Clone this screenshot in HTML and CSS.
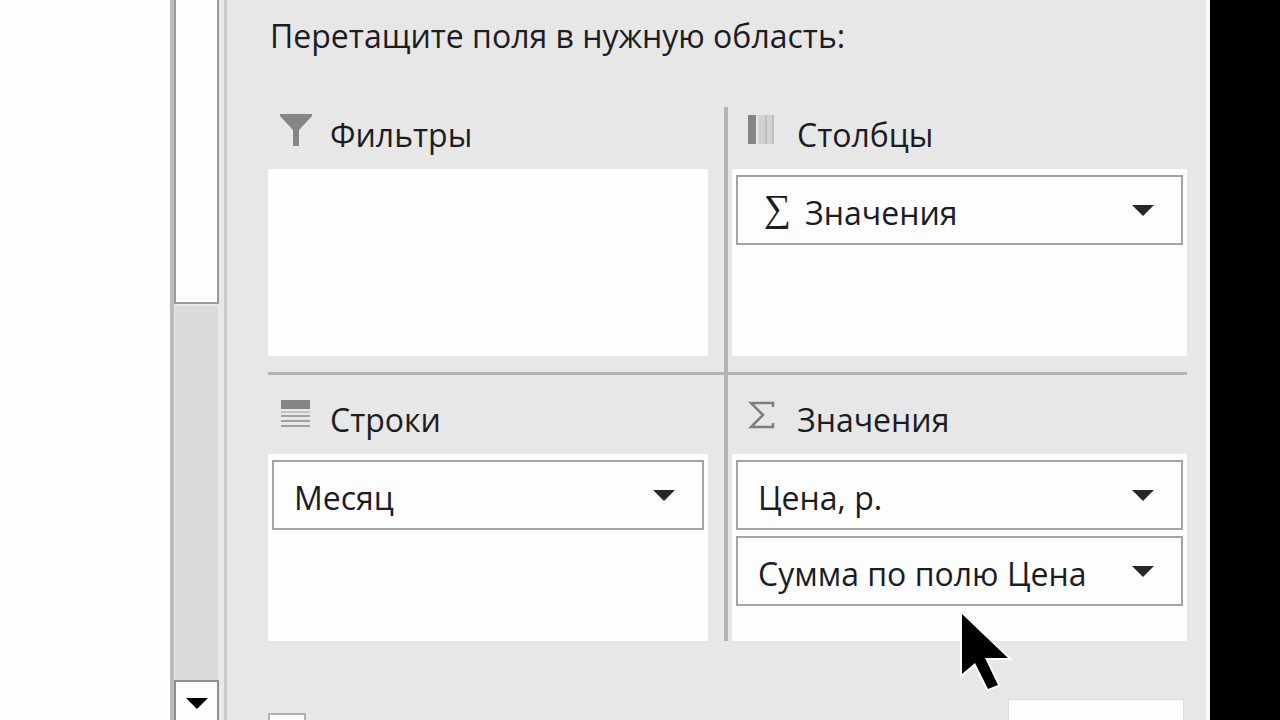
FILE: index.html
```html
<!DOCTYPE html>
<html lang="ru">
<head>
    <meta charset="UTF-8">
    <meta name="viewport" content="width=device-width, initial-scale=1.0">
    <title>Поля сводной таблицы</title>
    <link rel="stylesheet" href="styles.css">
</head>
<body>
    <div class="sheet"></div>

    <div class="scrollbar">
        <div class="thumb"></div>
        <div class="track"></div>
        <button class="scroll-down" aria-label="Вниз">
            <svg class="arrow" viewBox="0 0 22 11"><path d="M0 0H22L11 11Z"/></svg>
        </button>
    </div>

    <main class="panel">
        <h1>Перетащите поля в нужную область:</h1>

        <div class="areas">
            <section class="area area-left">
                <h2>
                    <svg class="icon" viewBox="0 0 32 32"><path fill="#858585" d="M0 0H32V2L19 16V32H13V16L0 2Z"/></svg>
                    Фильтры
                </h2>
                <div class="drop"></div>
            </section>

            <section class="area area-right">
                <h2>
                    <svg class="icon" viewBox="0 0 32 32">
                        <path fill="#858585" d="M1 1H9V30H1Z"/>
                        <path fill="#d2d2d2" d="M11 1H27V30H11Z"/>
                        <path fill="#bebebe" d="M18 1H20V30H18ZM25 1H27V30H25Z"/>
                    </svg>
                    Столбцы
                </h2>
                <div class="drop">
                    <button class="field">
                        <span class="sum">∑</span>
                        <span class="name">Значения</span>
                        <svg class="arrow" viewBox="0 0 22 11"><path d="M0 0H22L11 11Z"/></svg>
                    </button>
                </div>
            </section>

            <section class="area area-left area-bottom">
                <h2>
                    <svg class="icon" viewBox="0 0 32 32">
                        <path fill="#858585" d="M1 1H30V10H1Z"/>
                        <path fill="#c4c4c4" d="M1 12H30V14H1Z"/>
                        <path fill="#a0a0a0" d="M1 16H30V18H1ZM1 21H30V23H1ZM1 26H30V28H1Z"/>
                    </svg>
                    Строки
                </h2>
                <div class="drop">
                    <button class="field">
                        <span class="name">Месяц</span>
                        <svg class="arrow" viewBox="0 0 22 11"><path d="M0 0H22L11 11Z"/></svg>
                    </button>
                </div>
            </section>

            <section class="area area-right area-bottom">
                <h2>
                    <svg class="icon" viewBox="0 0 32 32">
                        <path fill="none" stroke="#7d7d7d" stroke-width="2.5" d="M26 8V4H4L16 16L4 28H26V24"/>
                    </svg>
                    Значения
                </h2>
                <div class="drop">
                    <button class="field">
                        <span class="name">Цена, р.</span>
                        <svg class="arrow" viewBox="0 0 22 11"><path d="M0 0H22L11 11Z"/></svg>
                    </button>
                    <button class="field">
                        <span class="name">Сумма по полю Цена</span>
                        <svg class="arrow" viewBox="0 0 22 11"><path d="M0 0H22L11 11Z"/></svg>
                    </button>
                </div>
            </section>
        </div>

        <div class="update">
            <input type="checkbox" aria-label="Отложить обновление макета">
            <button aria-label="Обновить"></button>
        </div>
    </main>

    <svg class="cursor" viewBox="0 0 56 84">
        <path d="M4 5V65L17 54L30 80L40 76L27 49H50Z"/>
    </svg>
</body>
</html>
```
FILE: styles.css
```css
* {
    box-sizing: border-box;
}
body {
    margin: 0;
    height: 100vh;
    display: flex;
    overflow: hidden;
    background: #000;
    padding-right: 70px;
    font-family: "Open Sans", "Noto Sans", sans-serif;
    font-size: 32px;
    color: #1c1c24;
}
button {
    font: inherit;
    color: inherit;
    background: #fdfdfd;
    border: 2px solid #a3a3a3;
    border-radius: 0;
}
.sheet {
    width: 170px;
    background: #fefefe;
}
.scrollbar {
    width: 57px;
    display: flex;
    flex-direction: column;
    background: #e8e8e8;
    border-left: 4px solid #bcbcbc;
    border-right: 3px solid #cbcbcb;
    padding-right: 5px;
}
.thumb {
    flex: 304;
    background: #fefefe;
    border: 2px solid #9a9a9a;
    border-top: none;
}
.track {
    flex: 377;
    margin: 2px 1px 0;
    background: #d8dadc;
}
.scroll-down {
    height: 40px;
    padding: 4px 0 0;
    display: flex;
    justify-content: center;
    align-items: center;
    border-color: #8f8f93;
    border-bottom: none;
}
.arrow {
    width: 22px;
    height: 11px;
    fill: #26262b;
}
.scroll-down .arrow {
    fill: #000;
}
.panel {
    flex: 1;
    display: flex;
    flex-direction: column;
    background: #e7e7e7;
    border-right: 4px solid #fafafa;
    padding: 12px 19px 0 41px;
}
h1, h2 {
    margin: 0;
    font-size: 32px;
    font-weight: normal;
}
h1 {
    height: 95px;
    padding-left: 2px;
    line-height: 48px;
}
.areas {
    display: grid;
    grid-template-columns: 456fr 463fr;
}
.area-left {
    padding-right: 16px;
}
.area-right {
    border-left: 4px solid #b4b4b4;
    padding-left: 4px;
}
.area {
    padding-bottom: 16px;
}
.area-bottom {
    position: relative;
    padding-top: 20px;
    padding-bottom: 0;
}
.area-bottom::before {
    content: "";
    position: absolute;
    top: 0;
    left: 0;
    right: 0;
    height: 3px;
    background: #b4b4b4;
}
h2 {
    height: 62px;
    display: flex;
    align-items: center;
    line-height: 54px;
    padding: 0 0 6px 12px;
    gap: 18px;
}
.area-right h2 {
    padding-left: 15px;
}
.icon {
    width: 32px;
    height: 32px;
    margin-bottom: 10px;
}
.drop {
    height: 187px;
    padding: 6px 4px 0;
    display: flex;
    flex-direction: column;
    gap: 6px;
    background: #fdfdfd;
}
.field {
    display: flex;
    align-items: center;
    height: 70px;
    padding: 0 27px 0 20px;
    text-align: left;
    line-height: 48px;
}
.field .name {
    flex: 1;
    padding-top: 6px;
    white-space: nowrap;
}
.sum {
    padding: 0 14px 4px 6px;
    font-family: "Liberation Serif", serif;
    font-size: 38px;
}
.update {
    flex: 1;
    display: flex;
    justify-content: space-between;
    align-items: stretch;
    padding: 58px 3px 0 0;
}
.update input {
    appearance: none;
    width: 38px;
    margin: 14px 0 0;
    background: #fdfdfd;
    border: 2px solid #b0b0b0;
    border-bottom: none;
}
.update button {
    width: 176px;
    padding: 0;
    border: 1px solid #dedede;
    border-bottom: none;
}
.cursor {
    position: absolute;
    left: 958px;
    top: 609px;
    width: 56px;
    height: 84px;
    stroke: #fff;
    stroke-width: 4px;
    paint-order: stroke;
}
```
